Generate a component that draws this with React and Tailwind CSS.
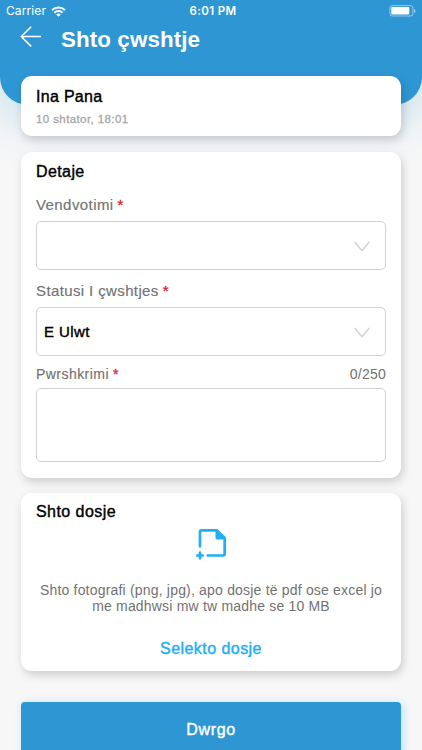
import React from "react";

const MEDIUM = "[-webkit-text-stroke:0.4px_currentColor]";
const CARD = "rounded-[11px] bg-white px-[15px] shadow-[2px_4px_10px_rgba(0,0,0,0.17)]";

function StatusBar() {
  return (
    <div className="grid h-[22px] grid-cols-3 items-center px-[6px] text-[12px] text-white font-['Inter',sans-serif]">
      <div className="flex items-center gap-[5px]">
        <span className="text-[12px] tracking-[0.1px]">Carrier</span>
        <svg width="15" height="11" viewBox="0 0 15 11" fill="none" stroke="white" strokeWidth="2">
          <path d="M1 4.1a9.3 9.3 0 0 1 13 0" />
          <path d="M3.4 6.7a5.9 5.9 0 0 1 8.2 0" />
          <path d="M5.2 8.5a3.3 3.3 0 0 1 4.6 0L7.5 10.8z" fill="white" stroke="none" />
        </svg>
      </div>
      <span className="pl-[4px] pt-[2px] text-center text-[11.5px] font-semibold tracking-[0.35px]">6:01 PM</span>
      <svg className="justify-self-end" width="27" height="12" viewBox="0 0 27 12">
        <rect x="0.9" y="0.6" width="23" height="10.4" rx="2.4" fill="none" stroke="white" strokeOpacity="0.5" />
        <rect x="2.3" y="2" width="18" height="7.6" rx="1" fill="white" />
        <path d="M25 4v4q1.6-.5 1.6-2T25 4z" fill="white" fillOpacity="0.5" />
      </svg>
    </div>
  );
}

function Label({ children }) {
  return (
    <span className="text-[#727272] [-webkit-text-stroke:0.15px_currentColor]">
      {children}
      <span className="ml-[4px] text-[#e0202b] [-webkit-text-stroke:0.3px_currentColor]">*</span>
    </span>
  );
}

function Select({ value }) {
  return (
    <div className="flex h-[49px] items-center justify-between rounded-[5px] border border-[#d2d2d2] pl-[7px] pr-[15px]">
      <span className={`text-[15px] leading-[20px] tracking-[0.4px] text-black ${MEDIUM}`}>{value}</span>
      <svg className="mt-[2px]" width="16" height="11" viewBox="0 0 16 11" fill="none" stroke="#d2d2d2" strokeWidth="1.4" strokeLinecap="round" strokeLinejoin="round">
        <path d="M0.9 1.3 8 9.7l7.1-8.4" />
      </svg>
    </div>
  );
}

export default function App() {
  return (
    <div className="h-[750px] w-[422px] overflow-hidden bg-[#f7f7f7] font-['Liberation_Sans',Arial,sans-serif]">
      <header className="h-[105px] rounded-b-[28px] bg-[#2f96d4] shadow-[0_14px_46px_rgba(47,150,212,0.28)]">
        <StatusBar />
        <div className="flex items-start pl-[20px]">
          <svg className="mt-[4px]" width="22" height="22" viewBox="0 0 22 22" fill="none" stroke="white" strokeWidth="1.6" strokeLinecap="round" strokeLinejoin="round">
            <path d="M10.7 1.2 1.3 10.5l9.4 9.4M1.3 10.5h19" />
          </svg>
          <h1 className="ml-[19px] mt-[3px] text-[22.4px] font-bold leading-[30px] tracking-[0.08px] text-white">Shto çwshtje</h1>
        </div>
      </header>

      <main className="-mt-[29px] flex flex-col px-[21px]">
        <section className={`relative h-[60px] pt-[11px] ${CARD}`}>
          <h2 className={`text-[16px] leading-[20px] tracking-[0.3px] text-black ${MEDIUM}`}>Ina Pana</h2>
          <p className="mt-[3px] text-[11.5px] leading-[18px] tracking-[0.4px] text-[#a6a6a6] [-webkit-text-stroke:0.3px_currentColor]">10 shtator, 18:01</p>
        </section>

        <section className={`relative mt-[16px] h-[326px] pt-[10px] ${CARD}`}>
          <h2 className={`text-[16px] leading-[20px] tracking-[0.4px] text-black ${MEDIUM}`}>Detaje</h2>
          <p className="mb-[6px] mt-[13px] text-[15px] leading-[20px] tracking-[0.42px]">
            <Label>Vendvotimi</Label>
          </p>
          <Select value="" />
          <p className="mb-[6px] mt-[11px] text-[15px] leading-[20px] tracking-[0.38px]">
            <Label>Statusi I çwshtjes</Label>
          </p>
          <Select value="E Ulwt" />
          <p className="mb-[4px] mt-[8px] flex justify-between text-[14px] leading-[20px] tracking-[0.45px]">
            <Label>Pwrshkrimi</Label>
            <span className="tracking-[0.25px] text-[#727272]">0/250</span>
          </p>
          <div className="h-[74px] rounded-[5px] border border-[#d2d2d2]" />
        </section>

        <section className={`relative mt-[15px] flex h-[178px] flex-col pt-[9px] ${CARD}`}>
          <h2 className={`text-[16px] leading-[20px] tracking-[0.45px] text-black ${MEDIUM}`}>Shto dosje</h2>
          <svg className="ml-[160px] mt-[4px] shrink-0" width="32" height="34" viewBox="0 0 32 34" fill="none" stroke="#21aef5" strokeWidth="2.7" strokeLinecap="round" strokeLinejoin="round">
            <path d="M4 20.3V5.7Q4 4.4 5.3 4.4H21L28.7 12V27.8Q28.7 29.5 27 29.5H11.8" />
            <path d="M19.5 4V11.5Q19.5 13.4 21.4 13.4H29.5V12L21 4z" fill="#21aef5" stroke="none" />
            <path d="M4 26.7v5.6M1.2 29.5h5.6" />
          </svg>
          <p className="mt-[22px] whitespace-nowrap text-center text-[14px] leading-[16.3px] tracking-[0.19px] text-[#727272]">
            Shto fotografi (png, jpg), apo dosje të pdf ose excel jo
            <br />
            me madhwsi mw tw madhe se 10 MB
          </p>
          <button className={`mt-[24px] self-center text-[16px] leading-[20px] tracking-[0.45px] text-[#21aef5] ${MEDIUM}`}>Selekto dosje</button>
        </section>

        <button className={`mt-[31px] h-[55px] w-full rounded-[4px] bg-[#2f96d4] text-[16px] tracking-[0.7px] text-white shadow-[2px_2px_10px_rgba(33,174,245,0.3)] ${MEDIUM}`}>
          Dwrgo
        </button>
      </main>
    </div>
  );
}
